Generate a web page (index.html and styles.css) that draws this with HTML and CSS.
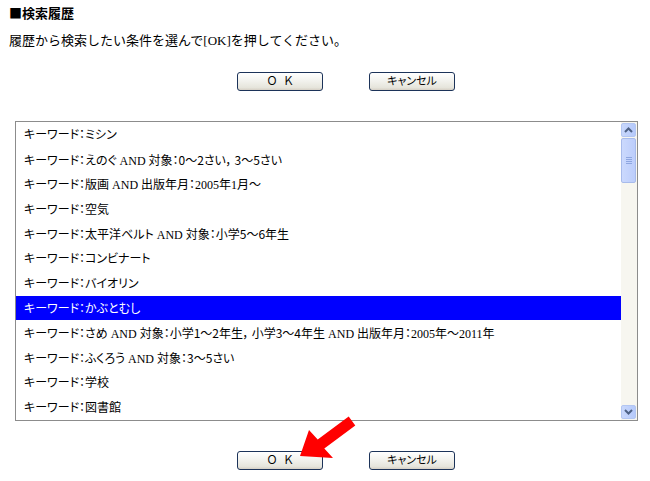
FILE: index.html
```html
<!DOCTYPE html>
<html lang="ja">
<head>
<meta charset="utf-8">
<link rel="stylesheet" href="styles.css">
</head>
<body>
<div class="page">
  <h1 class="title">■検索履歴</h1>
  <p class="desc">履歴から検索したい条件を選んで[OK]を押してください。</p>
  <div class="btnrow top">
    <button class="btn">Ｏ&nbsp;&nbsp;Ｋ</button>
    <button class="btn">キャンセル</button>
  </div>
  <div class="listbox">
    <ul class="items">
      <li><span>キーワード：ミシン</span></li>
      <li><span>キーワード：えのぐ AND 対象：<span class="g">0～2さい， 3～5さい</span></span></li>
      <li><span>キーワード：版画 AND 出版年月：2005年1月～</span></li>
      <li><span>キーワード：空気</span></li>
      <li><span>キーワード：太平洋ベルト AND 対象：<span class="g">小学5～6年生</span></span></li>
      <li><span>キーワード：コンビナート</span></li>
      <li><span>キーワード：バイオリン</span></li>
      <li class="sel"><span>キーワード：かぶとむし</span></li>
      <li><span>キーワード：さめ AND 対象：<span class="g">小学1～2年生， 小学3～4年生</span> AND 出版年月：2005年～2011年</span></li>
      <li><span>キーワード：ふくろう AND 対象：<span class="g">3～5さい</span></span></li>
      <li><span>キーワード：学校</span></li>
      <li><span>キーワード：図書館</span></li>
    </ul>
    <div class="scrollbar">
      <div class="sbtn up"><svg width="9" height="6" viewBox="0 0 9 6"><path d="M1 5 L4.5 1.5 L8 5" fill="none" stroke="#4d6185" stroke-width="2"/></svg></div>
      <div class="thumb"><span></span><span></span><span></span><span></span></div>
      <div class="track"></div>
      <div class="sbtn down"><svg width="9" height="6" viewBox="0 0 9 6"><path d="M1 1 L4.5 4.5 L8 1" fill="none" stroke="#4d6185" stroke-width="2"/></svg></div>
    </div>
  </div>
  <div class="btnrow bottom">
    <button class="btn">Ｏ&nbsp;&nbsp;Ｋ</button>
    <button class="btn">キャンセル</button>
  </div>
  <svg class="arrow" width="650" height="481" viewBox="0 0 650 481">
    <polygon points="300,456 309,430 317.7,439.6 348.7,416.6 355.3,425.4 324.3,448.4 333,458" fill="#ff0000"/>
  </svg>
</div>
</body>
</html>
```

FILE: styles.css
```css
html, body {
  margin: 0;
  padding: 0;
  background: #ffffff;
}
.page {
  position: relative;
  width: 650px;
  height: 481px;
  overflow: hidden;
  font-family: "Liberation Serif", "Noto Sans CJK JP", serif;
  color: #000;
}
.title {
  margin: 0;
  padding: 4px 0 0 9px;
  font-size: 13px;
  line-height: 17px;
  font-weight: bold;
  font-family: "Noto Sans CJK JP", sans-serif;
}
.desc {
  margin: 0;
  padding: 11px 0 0 9px;
  font-size: 13px;
  line-height: 17px;
}
.btnrow {
  display: flex;
  gap: 46px;
  padding-left: 237px;
}
.btnrow.top {
  margin-top: 23px;
}
.btnrow.bottom {
  margin-top: 30px;
}
.btn {
  width: 86px;
  height: 19px;
  margin: 0;
  padding: 0;
  border: 1px solid #1c3359;
  border-radius: 3px;
  background: linear-gradient(#ffffff 0%, #f4f4f0 40%, #e6e5dc 85%, #d6d0c5 100%);
  font-family: "DejaVu Sans", "Noto Sans CJK JP", sans-serif;
  font-size: 11px;
  line-height: 17px;
  color: #000;
  font-feature-settings: "palt";
}
.listbox {
  display: flex;
  margin: 30px 0 0 15px;
  width: 621px;
  height: 298px;
  border: 1px solid #8c8c8c;
}
.items {
  list-style: none;
  margin: 0;
  padding: 0;
  flex: 1;
}
.items li {
  display: flex;
  align-items: center;
  box-sizing: border-box;
  height: 24.8px;
  padding: 2px 0 0 8px;
  font-size: 12px;
  line-height: 16px;
  white-space: nowrap;
  overflow: hidden;
  font-feature-settings: "palt";
}
.items .g {
  font-family: "Noto Sans CJK JP", sans-serif;
}
.items li.sel {
  background: #0000ff;
  color: #ffffff;
}
.scrollbar {
  width: 15px;
  padding-right: 1px;
  display: flex;
  flex-direction: column;
  background: #f7f6f0;
}
.sbtn {
  height: 14px;
  margin-top: 1px;
  border: 1px solid #b3c6f2;
  border-radius: 2px;
  background: linear-gradient(90deg, #c9d8fc, #b5c9fb);
  display: flex;
  align-items: center;
  justify-content: center;
  box-sizing: border-box;
}
.sbtn.down {
  margin: 0 0 1px 0;
}
.thumb {
  height: 45px;
  margin-top: 1px;
  border: 1px solid #a8bbeb;
  border-radius: 2px;
  background: linear-gradient(90deg, #cbd9fd, #bccdfb);
  display: flex;
  flex-direction: column;
  align-items: center;
  justify-content: center;
  gap: 1px;
  box-sizing: border-box;
}
.thumb span {
  width: 6px;
  height: 1px;
  background: #8ea6e0;
}
.track {
  flex: 1;
}
.arrow {
  position: absolute;
  left: 0;
  top: 0;
  pointer-events: none;
}
```
